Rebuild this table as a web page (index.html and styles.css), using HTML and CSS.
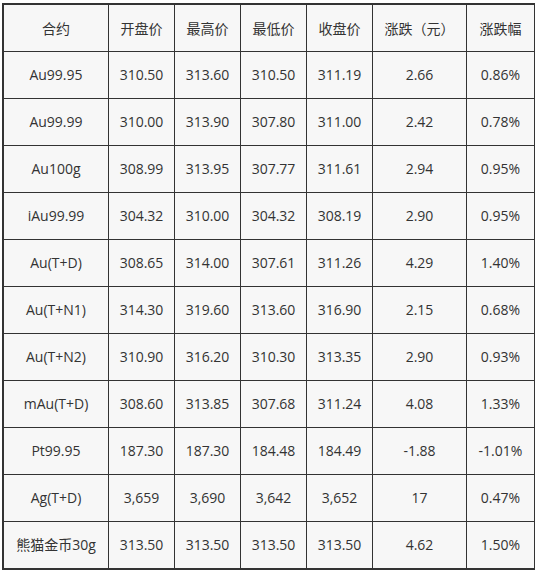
FILE: index.html
```html
<!DOCTYPE html>
<html lang="zh-CN">
<head>
<meta charset="utf-8">
<link rel="stylesheet" href="styles.css">
</head>
<body>
<div class="wrap">
<table class="quotes">
  <colgroup>
    <col class="c1"><col class="c2"><col class="c2"><col class="c2"><col class="c2"><col class="c6"><col class="c7">
  </colgroup>
  <thead>
    <tr><th>合约</th><th>开盘价</th><th>最高价</th><th>最低价</th><th>收盘价</th><th>涨跌（元）</th><th>涨跌幅</th></tr>
  </thead>
  <tbody>
    <tr><td>Au99.95</td><td>310.50</td><td>313.60</td><td>310.50</td><td>311.19</td><td>2.66</td><td>0.86%</td></tr>
    <tr><td>Au99.99</td><td>310.00</td><td>313.90</td><td>307.80</td><td>311.00</td><td>2.42</td><td>0.78%</td></tr>
    <tr><td>Au100g</td><td>308.99</td><td>313.95</td><td>307.77</td><td>311.61</td><td>2.94</td><td>0.95%</td></tr>
    <tr><td>iAu99.99</td><td>304.32</td><td>310.00</td><td>304.32</td><td>308.19</td><td>2.90</td><td>0.95%</td></tr>
    <tr><td>Au(T+D)</td><td>308.65</td><td>314.00</td><td>307.61</td><td>311.26</td><td>4.29</td><td>1.40%</td></tr>
    <tr><td>Au(T+N1)</td><td>314.30</td><td>319.60</td><td>313.60</td><td>316.90</td><td>2.15</td><td>0.68%</td></tr>
    <tr><td>Au(T+N2)</td><td>310.90</td><td>316.20</td><td>310.30</td><td>313.35</td><td>2.90</td><td>0.93%</td></tr>
    <tr><td>mAu(T+D)</td><td>308.60</td><td>313.85</td><td>307.68</td><td>311.24</td><td>4.08</td><td>1.33%</td></tr>
    <tr><td>Pt99.95</td><td>187.30</td><td>187.30</td><td>184.48</td><td>184.49</td><td>-1.88</td><td>-1.01%</td></tr>
    <tr><td>Ag(T+D)</td><td>3,659</td><td>3,690</td><td>3,642</td><td>3,652</td><td>17</td><td>0.47%</td></tr>
    <tr><td>熊猫金币30g</td><td>313.50</td><td>313.50</td><td>313.50</td><td>313.50</td><td>4.62</td><td>1.50%</td></tr>
  </tbody>
</table>
</div>
</body>
</html>
```

FILE: styles.css
```css
html, body {
  margin: 0;
  padding: 0;
  background: #ffffff;
}

body {
  padding: 3px 0 0 2px;
  font-family: "Open Sans", "Noto Sans CJK SC", sans-serif;
  font-size: 14px;
  color: #333333;
}

.wrap {
  display: inline-block;
  border-top: 1px solid #333333;
  border-left: 1px solid #333333;
  border-bottom: 1px solid #333333;
}

.quotes {
  border-collapse: collapse;
  table-layout: fixed;
  width: 532px;
  background: #f7f7f7;
}

.c1 { width: 105px; }
.c2 { width: 66px; }
.c6 { width: 94px; }
.c7 { width: 68px; }

.quotes th,
.quotes td {
  border: 1px solid #333333;
  padding: 0;
  height: 46px;
  text-align: center;
  vertical-align: middle;
  font-weight: normal;
  white-space: nowrap;
  line-height: 20px;
}

.quotes th {
  padding-top: 2px;
  height: 44px;
}
```
